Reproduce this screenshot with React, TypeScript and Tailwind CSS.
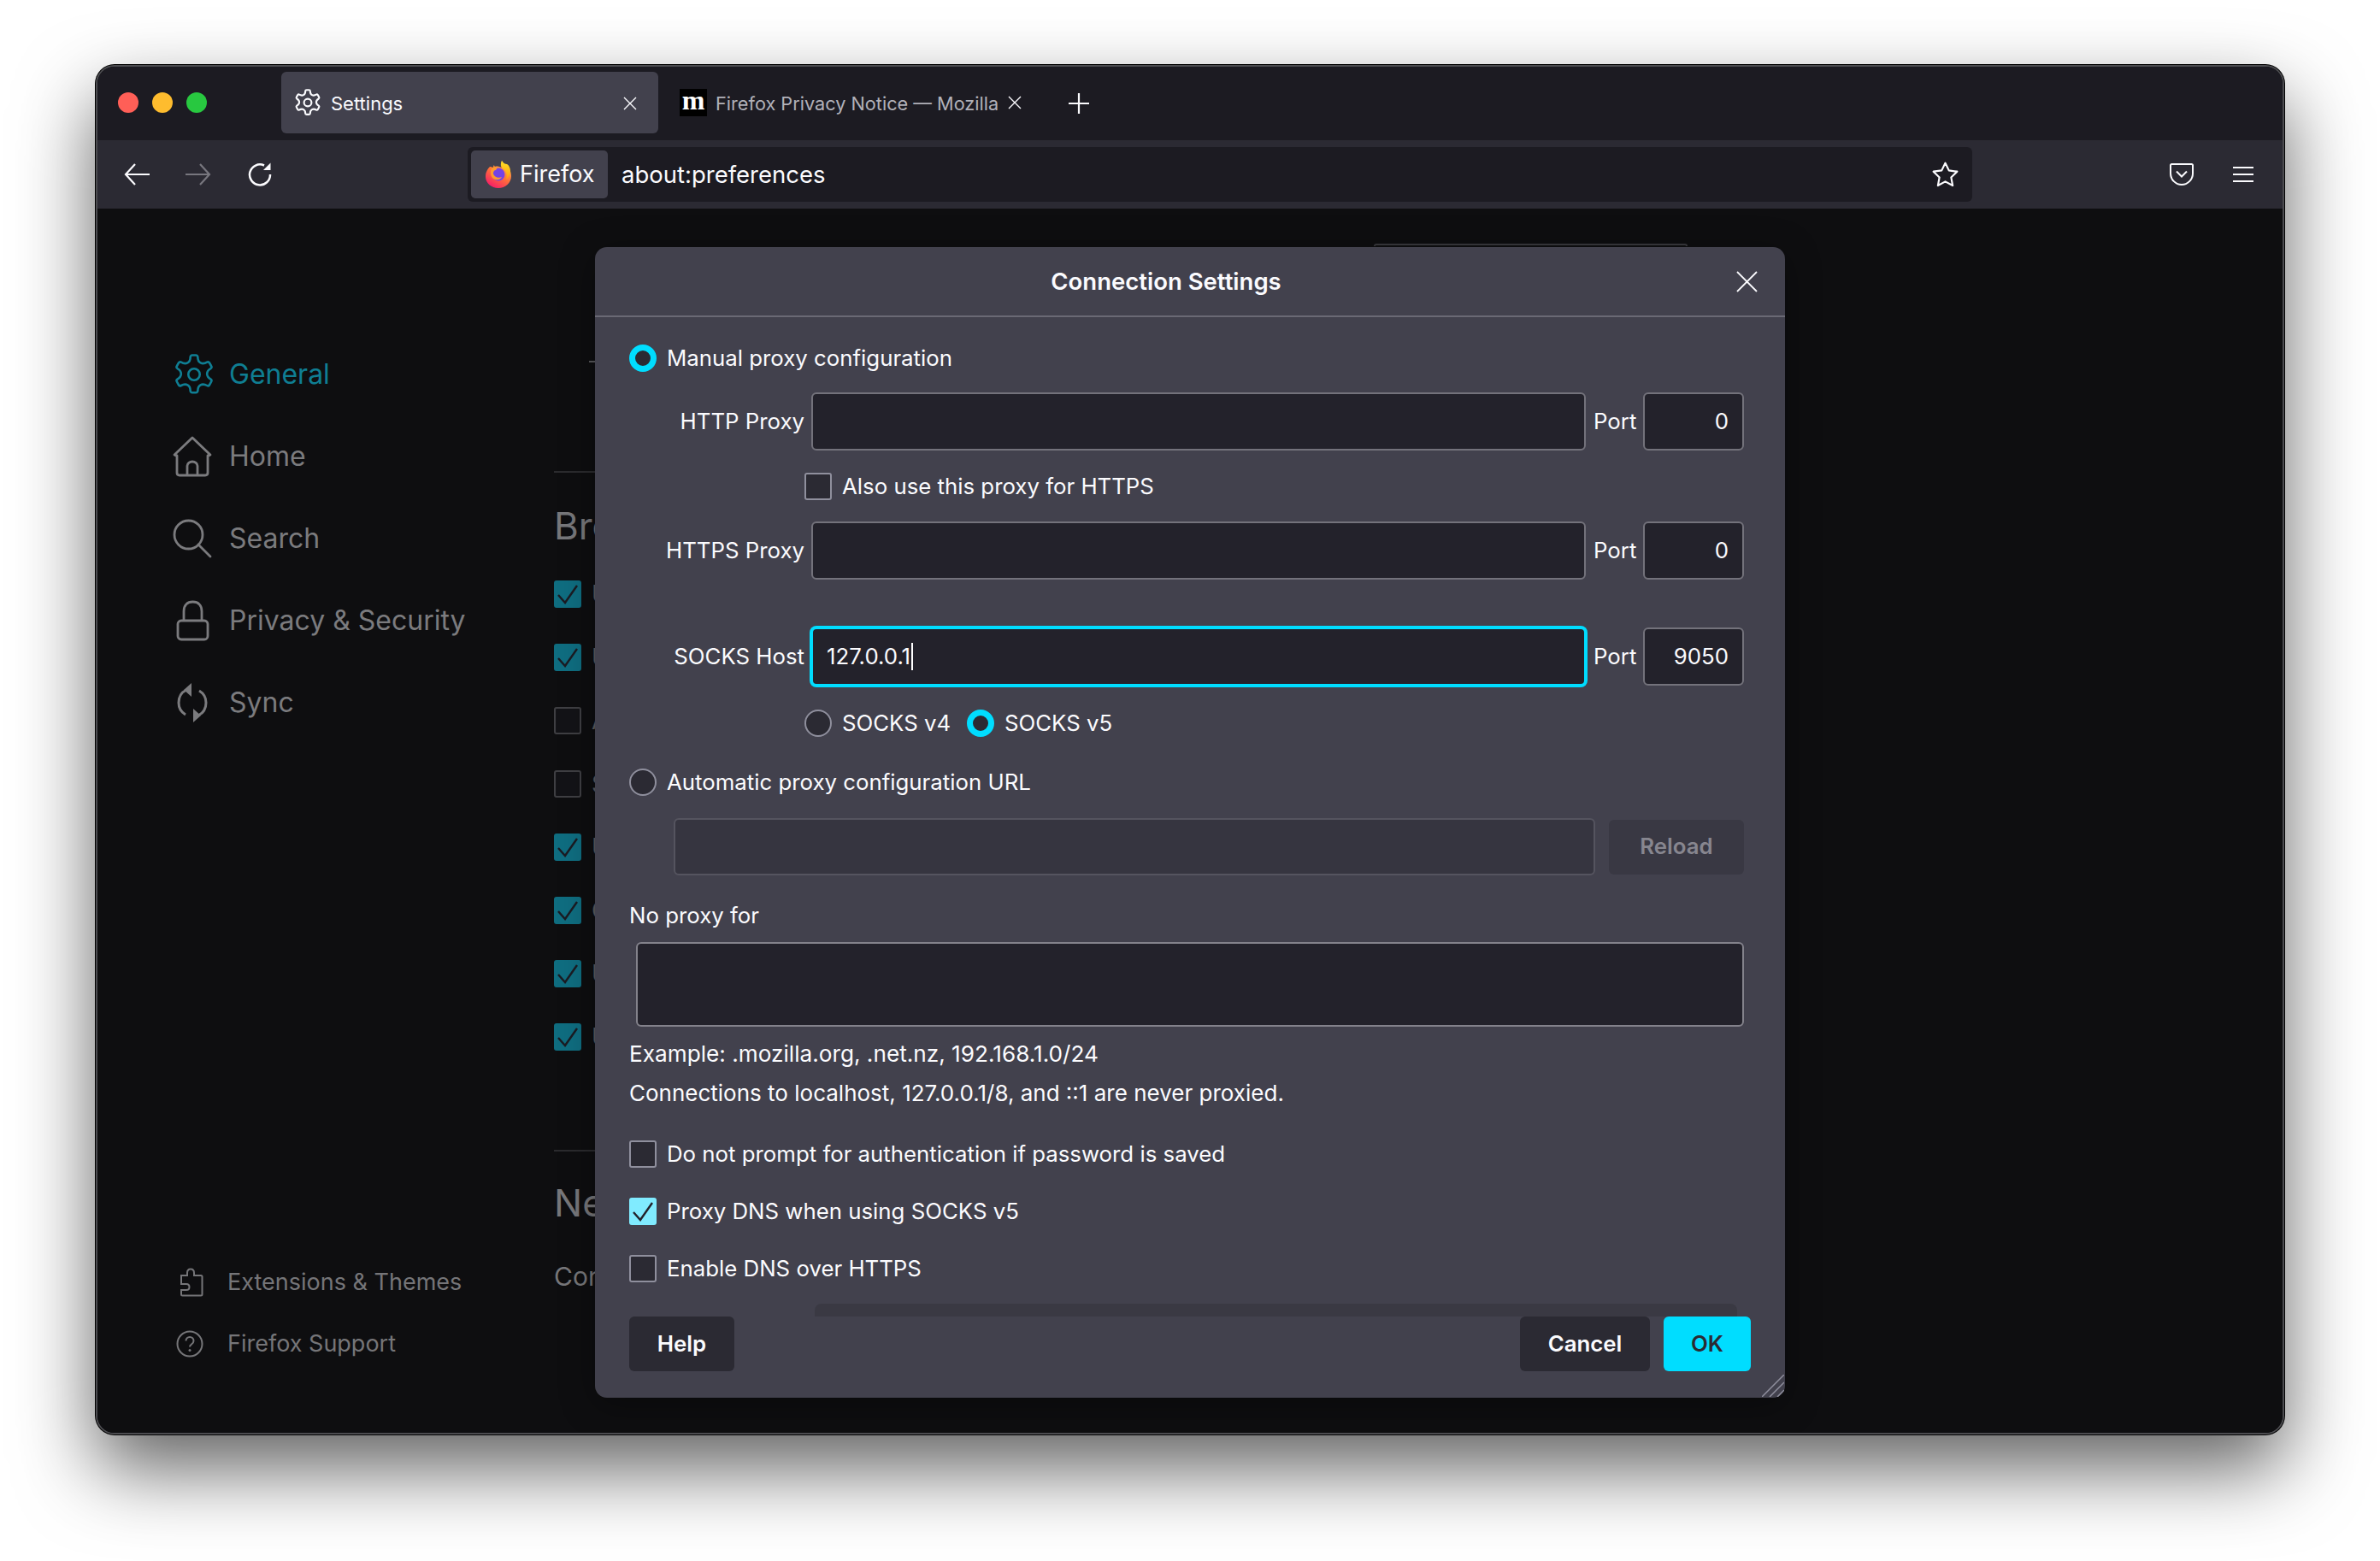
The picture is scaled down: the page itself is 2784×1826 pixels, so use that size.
import React from "react";

const FONT = "font-['Inter','Liberation_Sans',sans-serif]";

function Gear({ className, strokeWidth = 2 }: { className?: string; strokeWidth?: number }) {
  return (
    <svg viewBox="0 0 24 24" fill="none" stroke="currentColor" strokeWidth={strokeWidth} strokeLinejoin="round" className={className}>
      <circle cx="12" cy="12" r="3.1" />
      <path d="M10 2.6c0-.5.5-1 1-1h2c.5 0 1 .5 1 1 0 1.6.6 2.6 1.5 3.1.9.5 2.1.5 3.5-.3.5-.3 1-.1 1.300.3l1 1.800c.3.500.1 1-.3 1.300-1.400.8-2 1.800-2 2.900s.6 2.100 2 2.900c.4.300.6.800.3 1.300l-1 1.800c-.3.400-.8.600-1.300.300-1.400-.8-2.600-.8-3.500-.3-.9.500-1.500 1.500-1.500 3.100 0 .5-.5 1-1 1h-2c-.5 0-1-.5-1-1 0-1.600-.6-2.600-1.500-3.100-.9-.5-2.100-.5-3.500.3-.5.300-1 .1-1.300-.3l-1-1.800c-.3-.5-.1-1 .3-1.300 1.400-.8 2-1.800 2-2.900s-.6-2.100-2-2.900c-.4-.3-.6-.8-.3-1.300l1-1.800c.3-.4.800-.6 1.300-.3 1.400.8 2.600.8 3.500.3.900-.5 1.500-1.500 1.500-3.100Z" />
    </svg>
  );
}

function FirefoxLogo({ className }: { className?: string }) {
  return (
    <svg viewBox="0 0 32 32" className={className}>
      <defs>
        <linearGradient id="fx1" x1="0.8" y1="0" x2="0.2" y2="1">
          <stop offset="0" stopColor="#ffbd4f" />
          <stop offset="0.5" stopColor="#ff7139" />
          <stop offset="1" stopColor="#f5156c" />
        </linearGradient>
        <linearGradient id="fx2" x1="0.5" y1="0" x2="0.5" y2="1">
          <stop offset="0" stopColor="#ffe226" />
          <stop offset="1" stopColor="#ff980e" />
        </linearGradient>
      </defs>
      <path d="M20 0c-1 3-2 5 0 8-3-1-6-2-8-1-1-1-1-2-1-2-1 1-1 2-1 3-2-1-3-1-4-1-1 1-3 3-4 6-1 2-1 4-1 6 0 7 7 13 15 13s15-6 15-14c0-6-3-11-6-13-1 1-2 0-5-5Z" fill="url(#fx1)" />
      <path d="M20 0c-1 3-2 6 1 9 4 3 6 7 4 13 3-2 5-6 5-10 0-4-2-7-4-8-2 0-4-1-6-4Z" fill="url(#fx2)" />
      <circle cx="16" cy="16" r="7.500" fill="#7542e5" />
      <path d="M8 9c2-2 5-2 7-1l-2 3c-2 0-3 2-3 4 1 4 6 6 10 4-2 4-7 4-10 2-3-2-4-8-2-12Z" fill="#ff9a2e" />
    </svg>
  );
}

function Radio({ on = false }: { on?: boolean }) {
  return on ? (
    <span className="block w-[32px] h-[32px] shrink-0 rounded-full bg-[#2b2a33] border-[7px] border-[#00ddff]" />
  ) : (
    <span className="block w-[32px] h-[32px] shrink-0 rounded-full bg-[#2b2a33] border-2 border-[#8f8f9d]" />
  );
}

function Tick({ className }: { className?: string }) {
  return (
    <svg viewBox="0 0 28 30" fill="none" stroke="currentColor" strokeWidth="2.400" className={className}>
      <path d="M3 16l8 9L25 5" />
    </svg>
  );
}

function Check({ on = false }: { on?: boolean }) {
  return on ? (
    <span className="flex items-center justify-center w-[32px] h-[32px] shrink-0 rounded-[3px] bg-[#80ebff]">
      <Tick className="w-[28px] h-[30px] text-[#23222b]" />
    </span>
  ) : (
    <span className="block w-[32px] h-[32px] shrink-0 rounded-[3px] bg-[#2b2a33] border-2 border-[#8f8f9d]" />
  );
}

function DimCheck({ on, label }: { on: boolean; label: string }) {
  return (
    <div className="flex items-center h-[32px] text-[28px] text-[#5f5f62] whitespace-nowrap">
      {on ? (
        <span className="flex items-center justify-center w-[32px] h-[32px] shrink-0 rounded-[3px] bg-[#0f6d80]">
          <Tick className="w-[28px] h-[30px] text-[#1b1b22]" />
        </span>
      ) : (
        <span className="block w-[32px] h-[32px] shrink-0 rounded-[3px] bg-[#131317] border-2 border-[#3f3f43]" />
      )}
      <span className="ml-[12px]">{label}</span>
    </div>
  );
}

function Field({ className = "", children }: { className?: string; children?: React.ReactNode }) {
  return (
    <div className={`h-[68px] shrink-0 rounded-[6px] bg-[#23222b] border-2 border-[#73727b] flex items-center justify-end pr-[16px] text-[#fbfbfe] ${className}`}>
      {children}
    </div>
  );
}

function ProxyRow({ label, value, top, children, focused }: { label: string; value: string; top: string; children?: React.ReactNode; focused?: boolean }) {
  return (
    <div className={`flex items-center h-[68px] ${top}`}>
      <span className="w-[205px] text-right mr-[8px] whitespace-nowrap">{label}</span>
      {focused ? (
        <div className="w-[906px] h-[68px] shrink-0 rounded-[6px] bg-[#23222b] border-2 border-[#00ddff] ring-2 ring-[#00ddff] flex items-center pl-[16px]">
          {children}
        </div>
      ) : (
        <Field className="w-[906px]" />
      )}
      <span className="w-[58px] ml-[9px]">Port</span>
      <Field className="w-[118px]">{value}</Field>
    </div>
  );
}

function SideItem({ icon, label, active }: { icon: React.ReactNode; label: string; active?: boolean }) {
  return (
    <div className={`flex items-center h-[96px] ${active ? "text-[#0f7e93]" : "text-[#7b7b7e]"}`}>
      <span className="w-[66px] -ml-[2px] shrink-0 flex justify-start">{icon}</span>
      <span>{label}</span>
    </div>
  );
}

const ICON = "fill-none stroke-current";
const LABELS = ["U", "U", "A", "S", "U", "C", "U", "U"];

export default function App() {
  return (
    <div className={`w-[2784px] h-[1826px] bg-white overflow-hidden pt-[76px] pl-[112px] ${FONT}`}>
      <div className="w-[2560px] h-[1602px] rounded-[22px] overflow-hidden shadow-[0_0_0_1px_#000,0_40px_90px_rgba(0,0,0,0.62)] border-2 border-[#4c4c50] bg-[#0e0e10] flex flex-col relative">
        {/* Tab strip */}
        <div className="h-[86px] shrink-0 bg-[#1c1b22] flex items-start pt-[6px]">
          <div className="flex items-center gap-[16px] ml-[24px] h-[72px]">
            <span className="w-[24px] h-[24px] rounded-full bg-[#ff5f57]" />
            <span className="w-[24px] h-[24px] rounded-full bg-[#febc2e]" />
            <span className="w-[24px] h-[24px] rounded-full bg-[#28c840]" />
          </div>
          <div className="ml-[87px] w-[441px] h-[72px] rounded-[6px] bg-[#42414d] flex items-center pl-[14px] pr-[25px] text-[#fbfbfe] text-[22px]">
            <Gear className="w-[34px] h-[34px]" strokeWidth={1.500} />
            <span className="ml-[10px] pt-[2px]">Settings</span>
            <svg viewBox="0 0 16 16" className="ml-auto w-[16px] h-[16px] mt-[2px]" stroke="currentColor" strokeWidth="1.400">
              <path d="M1 1l14 14M15 1L1 15" />
            </svg>
          </div>
          <div className="ml-[25px] h-[72px] flex items-center text-[#b1b1b9] text-[21.7px]">
            <span className="w-[32px] h-[32px] bg-black text-white flex items-center justify-center font-['Liberation_Serif',serif] font-bold text-[32px] leading-none pb-[6px]">m</span>
            <span className="ml-[10px] pt-[2px] whitespace-nowrap">Firefox Privacy Notice — Mozilla</span>
            <svg viewBox="0 0 16 16" className="ml-[11px] w-[16px] h-[16px] text-[#fbfbfe]" stroke="currentColor" strokeWidth="1.400">
              <path d="M1 1l14 14M15 1L1 15" />
            </svg>
            <svg viewBox="0 0 24 24" className="ml-[55px] mt-[2px] w-[24px] h-[24px] text-[#fbfbfe]" stroke="currentColor" strokeWidth="2.200">
              <path d="M12 0v24M0 12h24" />
            </svg>
          </div>
        </div>

        {/* Toolbar */}
        <div className="h-[80px] shrink-0 bg-[#2b2a33] flex items-center text-[#fbfbfe]">
          <svg viewBox="0 0 30 26" className={`ml-[31px] w-[30px] h-[26px] ${ICON}`} strokeWidth="2.200">
            <path d="M13 1L2 13l11 12M2 13h28" />
          </svg>
          <svg viewBox="0 0 30 26" className={`ml-[42px] w-[30px] h-[26px] text-[#77767e] ${ICON}`} strokeWidth="2.200">
            <path d="M17 1l11 12-11 12M28 13H0" />
          </svg>
          <svg viewBox="0 0 28 28" className={`ml-[43px] w-[28px] h-[28px] ${ICON}`} strokeWidth="2.500">
            <path d="M19 3.500A12 12 0 1 0 26 14" />
            <path d="M18 9h8.500V0.500z" fill="currentColor" stroke="none" />
          </svg>
          <div className="ml-[229px] w-[1760px] h-[64px] rounded-[6px] bg-[#1c1b22] flex items-center pl-[4px] pr-[14px]">
            <div className="w-[160px] h-[56px] rounded-[5px] bg-[#42414d] flex items-center pl-[16px] text-[27px]">
              <FirefoxLogo className="w-[32px] h-[32px] shrink-0" />
              <span className="ml-[9px] pt-[1px]">Firefox</span>
            </div>
            <span className="ml-[16px] pt-[1px] text-[27.5px]">about:preferences</span>
            <svg viewBox="0 0 24 24" className={`ml-auto w-[35px] h-[35px] ${ICON}`} strokeWidth="1.500" strokeLinejoin="round">
              <path d="M12 2.500l2.900 6 6.600.9-4.800 4.600 1.200 6.600L12 17.400l-5.900 3.200 1.200-6.600L2.500 9.400l6.600-.9z" />
            </svg>
          </div>
          <svg viewBox="0 0 28 26" className={`ml-[231px] w-[28px] h-[26px] ${ICON}`} strokeWidth="2">
            <path d="M2.500 1h23c.8 0 1.500.7 1.500 1.500V12c0 7-6 13-13 13S1 19 1 12V2.500C1 1.700 1.700 1 2.500 1Z" />
            <path d="M8 9.500l6 6 6-6" />
          </svg>
          <svg viewBox="0 0 24 20" className="ml-[46px] w-[24px] h-[20px]" stroke="currentColor" strokeWidth="2.200">
            <path d="M0 2h24M0 10h24M0 18h24" />
          </svg>
        </div>

        {/* Page */}
        <div className="flex-1 relative flex min-h-0 bg-[#0e0e10]">
          <div className="w-[534px] shrink-0 flex flex-col pl-[90px] pt-[146px] text-[32px]">
            <SideItem
              active
              label="General"
              icon={<Gear className="w-[52px] h-[52px] -ml-[1px]" strokeWidth={1.200} />}
            />
            <SideItem
              label="Home"
              icon={
                <svg viewBox="0 0 46 48" className={`w-[46px] h-[48px] ${ICON}`} strokeWidth="2.800" strokeLinejoin="round">
                  <path d="M2 22L23 2l21 20c-1 1-2 1-3 1v20c0 2-1 3-3 3H8c-2 0-3-1-3-3V23c-1 0-2 0-3-1Z" />
                  <path d="M17 46V35c0-3 3-5 6-5s6 2 6 5v11" />
                </svg>
              }
            />
            <SideItem
              label="Search"
              icon={
                <svg viewBox="0 0 46 46" className={`w-[46px] h-[46px] ${ICON}`} strokeWidth="2.800" strokeLinecap="round">
                  <circle cx="18.500" cy="18.500" r="16.500" />
                  <path d="M30 30l14 14" />
                </svg>
              }
            />
            <SideItem
              label="Privacy & Security"
              icon={
                <svg viewBox="0 0 46 48" className={`w-[46px] h-[48px] ${ICON}`} strokeWidth="2.800">
                  <rect x="6" y="24" width="35" height="22" rx="4" />
                  <path d="M13 24V13C13 6 17 2 23.500 2S34 6 34 13v11" />
                </svg>
              }
            />
            <SideItem
              label="Sync"
              icon={
                <svg viewBox="0 0 46 48" className={`w-[46px] h-[48px] ${ICON}`} strokeWidth="3">
                  <path d="M16 9C10 12 7 17 7 24c0 6 3 11 8 14" />
                  <path d="M30 39c6-3 9-8 9-15 0-6-3-11-8-14" />
                  <path d="M22 1v16l-9-8zM24 47V31l9 8z" fill="currentColor" stroke="none" />
                </svg>
              }
            />
            <div className="mt-[594px] flex flex-col text-[27px] text-[#757578]">
              <div className="flex items-center h-[72px]">
                <svg viewBox="0 0 28 34" className={`ml-[6px] w-[28px] h-[34px] ${ICON}`} strokeWidth="2">
                  <path d="M2 9h7V6c0-2.500 1.500-4.500 4-4.500s4 2 4 4.500v3h8c1 0 1.500 .5 1.500 1.500V31c0 1-.5 1.500-1.500 1.500H3.500C2.500 32.500 2 32 2 31v-5h6c2 0 3.500-1.500 3.500-3.500S10 19 8 19H2Z" />
                </svg>
                <span className="ml-[28px] whitespace-nowrap">Extensions &amp; Themes</span>
              </div>
              <div className="flex items-center h-[72px]">
                <svg viewBox="0 0 32 32" className={`ml-[2px] w-[32px] h-[32px] ${ICON}`} strokeWidth="2">
                  <circle cx="16" cy="16" r="14.500" />
                  <path d="M11.500 12.500c0-2.500 2-4.500 4.500-4.500s4.500 2 4.500 4.500c0 4-4.500 4-4.500 7" />
                  <circle cx="16" cy="23.500" r="1.500" fill="currentColor" stroke="none" />
                </svg>
                <span className="ml-[28px]">Firefox Support</span>
              </div>
            </div>
          </div>

          {/* Settings column behind the dialog */}
          <div className="flex-1 flex flex-col text-[#77777a] overflow-hidden">
            <div className="ml-[959px] w-[367px] h-[3px] mt-[41px] rounded-t-[6px] border-t-2 border-x-2 border-[#3a3a3e]" />
            <div className="mt-[134px] ml-[41px] w-[8px] h-[2px] bg-[#5a5a5d]" />
            <div className="mt-[127px] h-[2px] bg-[#2b2b2e] w-[60px]" />
            <div className="mt-[30px] text-[44px] leading-[64px]">Bro</div>
            <div className="mt-[32px] flex flex-col gap-[42px]">
              {LABELS.map((label, i) => (
                <DimCheck key={i} on={i !== 2 && i !== 3} label={label} />
              ))}
            </div>
            <div className="mt-[116px] h-[2px] bg-[#2b2b2e] w-[60px]" />
            <div className="mt-[28px] text-[44px] leading-[64px] whitespace-nowrap">Net</div>
            <div className="mt-[32px] text-[30px] whitespace-nowrap">Conf</div>
          </div>

          {/* Dialog */}
          <div className="absolute left-[582px] top-[45px] w-[1392px] h-[1346px] rounded-[14px] bg-[#42414d] text-[#fbfbfe] text-[25.8px] flex flex-col shadow-[0_8px_40px_rgba(0,0,0,0.35)]">
            <div className="h-[82px] shrink-0 border-b-2 border-[#6a6974] flex items-center justify-center pr-[56px] relative">
              <span className="font-semibold text-[27.5px] pt-[2px]">Connection Settings</span>
              <svg viewBox="0 0 25 25" className="absolute right-[32px] top-[28px] w-[25px] h-[25px]" stroke="currentColor" strokeWidth="1.800">
                <path d="M1 1l23 23M24 1L1 24" />
              </svg>
            </div>
            <div className="flex-1 flex flex-col pl-[40px] relative">
              <div className="mt-[32px] flex items-center h-[32px] gap-[12px]"><Radio on /><span>Manual proxy configuration</span></div>
              <ProxyRow label="HTTP Proxy" value="0" top="mt-[24px]" />
              <div className="mt-[26px] ml-[205px] flex items-center h-[32px] gap-[12px]"><Check /><span>Also use this proxy for HTTPS</span></div>
              <ProxyRow label="HTTPS Proxy" value="0" top="mt-[25px]" />
              <ProxyRow label="SOCKS Host" value="9050" top="mt-[56px]" focused>
                <span>127.0.0.1</span>
                <span className="w-[2px] h-[32px] bg-white ml-[1px]" />
              </ProxyRow>
              <div className="mt-[28px] ml-[205px] flex items-center h-[32px]">
                <Radio /><span className="ml-[12px] w-[146px]">SOCKS v4</span>
                <Radio on /><span className="ml-[12px]">SOCKS v5</span>
              </div>
              <div className="mt-[37px] flex items-center h-[32px] gap-[12px]"><Radio /><span>Automatic proxy configuration URL</span></div>
              <div className="mt-[26px] ml-[52px] flex items-center">
                <div className="w-[1078px] h-[67px] rounded-[6px] bg-[#363540] border-2 border-[#55545f]" />
                <div className="ml-[16px] w-[158px] h-[64px] rounded-[6px] bg-[#393843] text-[#87868f] font-semibold flex items-center justify-center">Reload</div>
              </div>
              <div className="mt-[31px] h-[32px] leading-[32px]">No proxy for</div>
              <div className="mt-[15px] ml-[8px] w-[1296px] h-[99px] rounded-[6px] bg-[#23222b] border-2 border-[#83828b]" />
              <div className="mt-[16px] h-[32px] leading-[32px] text-[26.2px]">Example: .mozilla.org, .net.nz, 192.168.1.0/24</div>
              <div className="mt-[14px] h-[32px] leading-[32px] text-[26px]">Connections to localhost, 127.0.0.1/8, and ::1 are never proxied.</div>
              <div className="mt-[39px] flex items-center h-[32px] gap-[12px]"><Check /><span>Do not prompt for authentication if password is saved</span></div>
              <div className="mt-[35px] flex items-center h-[32px] gap-[12px]"><Check on /><span>Proxy DNS when using SOCKS v5</span></div>
              <div className="mt-[35px] flex items-center h-[32px] gap-[12px]"><Check /><span>Enable DNS over HTTPS</span></div>
              <div className="mt-[25px] ml-[217px] w-[1079px] h-[15px] rounded-t-[8px] bg-[#3a3943]" />
              <div className="flex items-start font-semibold">
                <div className="w-[123px] h-[64px] rounded-[6px] bg-[#2b2a33] flex items-center justify-center">Help</div>
                <div className="ml-auto mr-[40px] flex gap-[16px]">
                  <div className="w-[152px] h-[64px] rounded-[6px] bg-[#2b2a33] flex items-center justify-center">Cancel</div>
                  <div className="w-[102px] h-[64px] rounded-[6px] bg-[#00ddff] text-[#2b2a33] flex items-center justify-center">OK</div>
                </div>
              </div>
              <svg viewBox="0 0 26 26" className="absolute right-[1px] bottom-[1px] w-[26px] h-[26px] text-[#8f8f9d]" stroke="currentColor" strokeWidth="1.500">
                <path d="M0 26L26 0M9 26L26 9M18 26l8-8" />
              </svg>
            </div>
          </div>
        </div>
      </div>
    </div>
  );
}
